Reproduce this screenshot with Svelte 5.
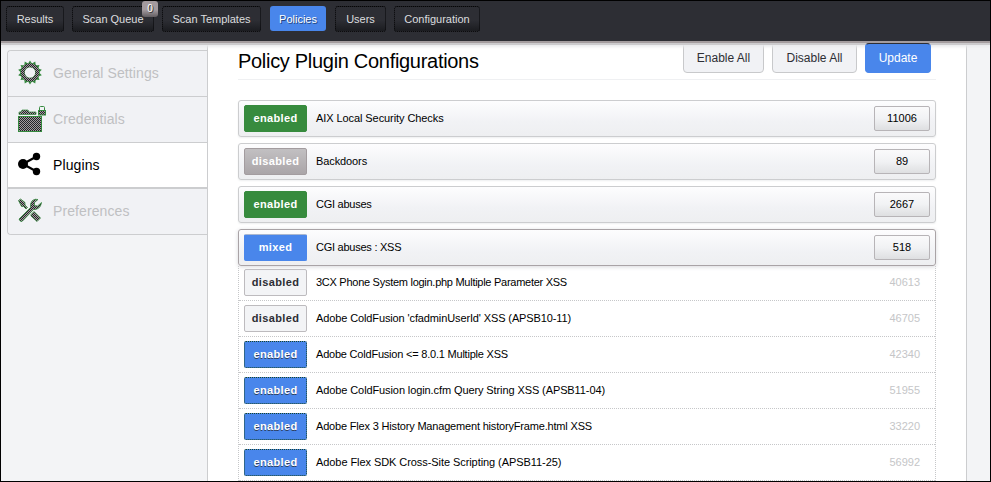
<script>
  const tabs = [
    { label: 'Results', width: 58 },
    { label: 'Scan Queue', width: 82, badge: '0' },
    { label: 'Scan Templates', width: 99 },
    { label: 'Policies', width: 56, active: true },
    { label: 'Users', width: 51 },
    { label: 'Configuration', width: 86 }
  ];
  const menu = [
    { label: 'General Settings', icon: 'gear' },
    { label: 'Credentials', icon: 'folder' },
    { label: 'Plugins', icon: 'share', active: true },
    { label: 'Preferences', icon: 'tools' }
  ];
  const families = [
    { state: 'enabled', name: 'AIX Local Security Checks', count: 11006, track: -0.08 },
    { state: 'disabled', name: 'Backdoors', count: 89, track: -0.1 },
    { state: 'enabled', name: 'CGI abuses', count: 2667, track: -0.25 },
    { state: 'mixed', name: 'CGI abuses : XSS', count: 518, track: -0.25 }
  ];
  const plugins = [
    { state: 'disabled', name: '3CX Phone System login.php Multiple Parameter XSS', id: 40613, track: -0.27 },
    { state: 'disabled', name: "Adobe ColdFusion 'cfadminUserId' XSS (APSB10-11)", id: 46705, track: -0.12 },
    { state: 'enabled', name: 'Adobe ColdFusion <= 8.0.1 Multiple XSS', id: 42340, track: -0.21 },
    { state: 'enabled', name: 'Adobe ColdFusion login.cfm Query String XSS (APSB11-04)', id: 51955, track: -0.1 },
    { state: 'enabled', name: 'Adobe Flex 3 History Management historyFrame.html XSS', id: 33220, track: -0.18 },
    { state: 'enabled', name: 'Adobe Flex SDK Cross-Site Scripting (APSB11-25)', id: 56992, track: -0.07 }
  ];
  const teeth = Array.from({ length: 14 }, (_, i) => (i * 360) / 14);
</script>

<div class="app">
  <nav>
    {#each tabs as t}
      <div class="tab" class:active={t.active} style="width:{t.width}px">
        {t.label}
        {#if t.badge}<span class="bubble">{t.badge}</span>{/if}
      </div>
    {/each}
  </nav>
  <div class="body">
    <aside>
      <div class="menu">
        {#each menu as m}
          <div class="item" class:active={m.active}>
            <svg width="30" height="28" viewBox="0 0 30 28">
              <defs>
                <pattern id="dots-{m.icon}" width="2" height="2" patternUnits="userSpaceOnUse">
                  <rect width="2" height="2" fill="#a39a9d" />
                  <rect width="1" height="1" fill="#222428" />
                  <rect x="1" y="1" width="1" height="1" fill="#222428" />
                </pattern>
              </defs>
              {#if m.icon === 'gear'}
                {#each teeth as a}
                  <path d="M10.7 5 L13 1.4 L15.3 5z" fill="#358a3e" transform="rotate({a} 13 13.5)" />
                {/each}
                <circle cx="13" cy="13.5" r="7.4" fill="none" stroke="#358a3e" stroke-width="4.4" />
                <circle cx="13" cy="13.5" r="7.4" fill="none" stroke="url(#dots-gear)" stroke-width="3.6" />
              {:else if m.icon === 'folder'}
                <path d="M2 9.500V7h2l1-2h6l1 2h7v2.500z" fill="url(#dots-folder)" stroke="#358a3e" stroke-width=".7" />
                <rect x="1.5" y="11.5" width="23" height="15" fill="url(#dots-folder)" stroke="#358a3e" />
                <path d="M22.5 6V2.5q0-1 1-1h3q1 0 1 1V6" fill="none" stroke="#358a3e" />
                <rect x="21.5" y="5.5" width="7" height="4.5" fill="url(#dots-folder)" stroke="#358a3e" />
              {:else if m.icon === 'share'}
                <path d="M19.5 5.5L6 13L19.5 20.5" fill="none" stroke="#000" stroke-width="2.2" />
                <circle cx="6" cy="13" r="5" /><circle cx="19.5" cy="5.5" r="3.7" /><circle cx="19.5" cy="20.5" r="3.7" />
              {:else}
                <g fill="url(#dots-tools)" stroke="#358a3e" stroke-width=".8" stroke-linejoin="round">
                  <path d="M1.5 3.5L3.5 2L8 5.5V8L10.5 10.5L9 12L6.500 9.500H4.500z" />
                  <path d="M14 17.500L17 14.500L23.500 21L20 24.500L14 19z" />
                  <path d="M2 22L13.500 10.500Q13 5.500 15.500 3.500Q18 1.500 21 2.500L17.500 5.500V8.500L20.500 9L24.500 5.500Q24 10 21 11.500Q18.500 13 16.500 12.500L5 24.500Q3 25 2 22z" />
                </g>
              {/if}
            </svg>
            <span>{m.label}</span>
          </div>
        {/each}
      </div>
    </aside>
    <main>
      <header>
        <h1>Policy Plugin Configurations</h1>
        <div class="actions">
          <button class="all-on">Enable All</button>
          <button class="all-off">Disable All</button>
          <button class="primary">Update</button>
        </div>
      </header>
      <div class="families">
        {#each families as f}
          <div class="family {f.state}">
            <span class="state {f.state}">{f.state}</span>
            <span class="name" style="letter-spacing:{f.track}px">{f.name}</span>
            <span class="count">{f.count}</span>
          </div>
        {/each}
      </div>
      <div class="plugins">
        {#each plugins as p}
          <div class="plugin">
            <span class="state {p.state}">{p.state}</span>
            <span class="name" style="letter-spacing:{p.track}px">{p.name}</span>
            <span class="id">{p.id}</span>
          </div>
        {/each}
      </div>
    </main>
  </div>
</div>

<style>
  .app, .app * { box-sizing: border-box; }
  .app {
    width: 991px; height: 482px; overflow: hidden; border: 1px solid #000;
    display: flex; flex-direction: column; background: #f3f4f6;
    font: 11px "Liberation Sans", Arial, sans-serif; color: #000;
  }
  nav {
    position: relative; z-index: 3; flex: none; height: 40px; background: #2d2e34; display: flex; gap: 8px;
    padding: 5px 0 0 5px; box-shadow: 0 2px 0 #a39c9e, 0 4px 0 #cccbcd, 0 6px 3px #e9eaec;
  }
  .tab {
    position: relative; height: 26px; line-height: 24px; text-align: center; color: #dcdddf;
    border: 1px dotted #050506; border-radius: 3px; white-space: nowrap;
    background: linear-gradient(#2d2e34 55%, #1b1c20);
  }
  .tab.active {
    background: #4986eb; color: #fff; border-color: #4986eb; height: 25px; margin: 0 1px 0 1px;
    text-shadow: 1px 1px 0 #24477f;
  }
  .bubble {
    position: absolute; right: -5px; top: -6px; width: 16px; height: 16px; border-radius: 3px;
    background: linear-gradient(#a39a9e 55%, #625d61); color: #fff; font-size: 10px; line-height: 16px; text-shadow: 1px 1px 0 #333;
  }
  .body { flex: 1; display: flex; min-height: 0; }
  aside { width: 206px; padding: 9px 0 0 6px; flex: none; }
  .menu { border: 1px solid #cccdcf; border-right: 0; border-radius: 4px 0 0 4px; height: 185px; }
  .item {
    height: 46px; display: flex; align-items: center; padding: 0 0 1px 9px; gap: 6px;
    border-bottom: 1px solid #cccdcf; font-size: 14px; letter-spacing: .1px; color: #bfc0c2; background: #f1f2f5;
  }
  .item:first-child { border-radius: 4px 0 0 0; }
  .item:last-child { border-bottom: 0; height: 45px; border-radius: 0 0 0 4px; }
  .item.active { background: #fff; color: #000; padding-bottom: 0; border-bottom: 2px solid #cccdcf; }
  .item svg { flex: none; }
  main {
    width: 760px; flex: none; background: #fff; border-left: 1px solid #cccdcf; border-right: 1px solid #cccdcf;
    padding: 0 30px; display: flex; flex-direction: column;
  }
  header { flex: none; height: 39px; border-bottom: 1px solid #eff0f2; display: flex; justify-content: space-between; }
  h1 { margin: 8px 0 0; font-size: 20px; line-height: 24px; font-weight: 400; letter-spacing: -.3px; }
  .actions { display: flex; gap: 8px; padding-right: 5px; height: 32px; }
  button {
    font: 12px "Liberation Sans", Arial, sans-serif; color: #2d2e34; border: 1px solid #c8c9cb;
    border-radius: 4px; background: #f1f2f5; padding: 2px 0 0; white-space: nowrap;
  }
  .all-on { width: 81px; }
  .all-off { width: 85px; }
  .primary {
    position: relative; z-index: 4; width: 66px; margin-top: 2px; padding: 0;
    background: #4986eb; color: #fff; border-color: #2d2e34 #4986eb #4986eb;
  }
  .families { flex: none; margin-top: 20px; display: flex; flex-direction: column; gap: 6px; position: relative; }
  .family {
    height: 37px; display: flex; align-items: flex-start; padding: 4px 5px 0; border: 1px solid #cccdcf; border-radius: 3px;
    background: linear-gradient(#fdfdfe, #f1f2f5 60%, #eeeff1); box-shadow: 0 1px 2px #eeeff0;
  }
  .family.mixed { border-color: #a9a3a6; box-shadow: 0 1px 4px #d8d9dc; }
  .state {
    flex: none; width: 63px; height: 27px; line-height: 25px; text-align: center; font-weight: 700; letter-spacing: .35px;
    color: #fff; border: 1px solid #378b3e; border-radius: 2px;
  }
  .family .state.enabled { background: #378b3e; }
  .family .state.disabled { background: linear-gradient(#c2c0c2, #aaa5a8); border-color: #a39c9f; }
  .family .state.mixed { background: #4986eb; border-color: #4986eb; border-top-color: #aab7cf; }
  .name { margin-left: 9px; white-space: nowrap; flex: 1; line-height: 27px; }
  .count {
    width: 56px; height: 25px; line-height: 23px; margin-top: 1px; text-align: center;
    border: 1px solid #b7b4b7; border-radius: 2px; background: linear-gradient(#fafafb, #f1f2f4 50%, #dedfe1);
  }
  .plugins { flex: none; border: 1px dotted #c6c7c9; border-width: 0 1px; }
  .plugin { height: 36px; display: flex; padding: 4px 15px 0 5px; border-bottom: 1px dotted #c6c7c9; }
  .plugin:first-child { height: 35px; padding-top: 3px; }
  .id { line-height: 27px; color: #c5c6c8; }
  .plugin .state.disabled { background: #f3f4f6; border-color: #bdbbbe; color: #2d2e34; }
  .plugin .state.enabled { background: #4986eb; border: 1px dotted #17452b; text-shadow: 0 1px 0 #2c3f60; }
</style>
